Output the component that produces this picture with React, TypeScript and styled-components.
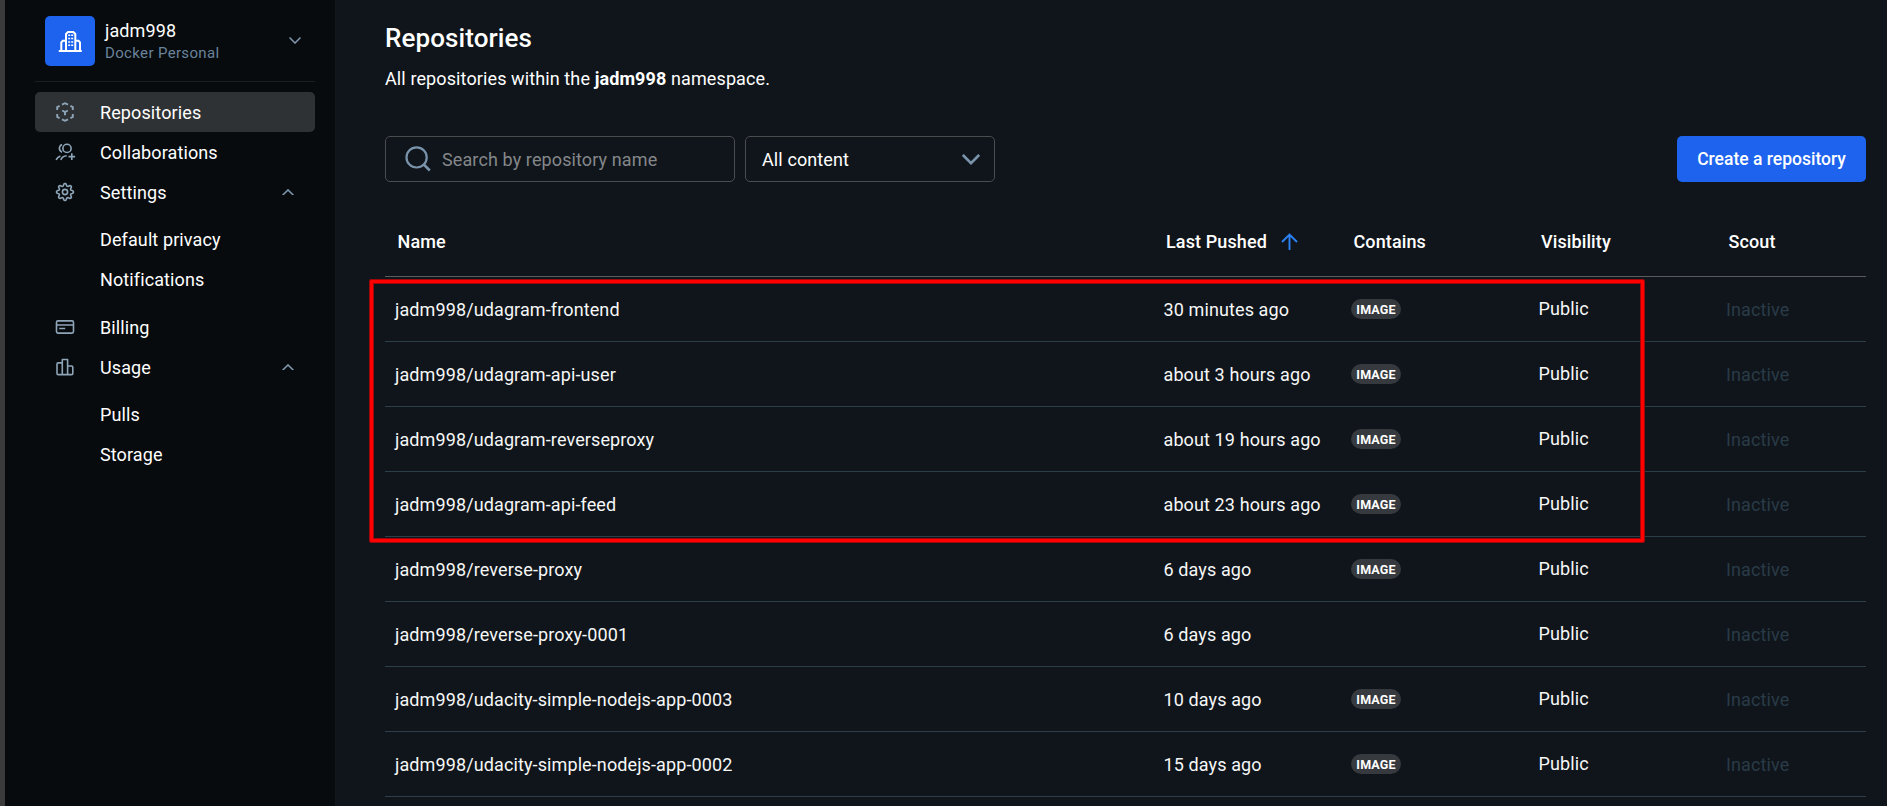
import React from 'react';
import styled, { createGlobalStyle, css } from 'styled-components';

const GlobalStyle = createGlobalStyle`
  *, *::before, *::after { box-sizing: border-box; }
  html, body { margin: 0; background: #10151b; }
  body {
    font-family: Roboto, "Liberation Sans", sans-serif;
    font-size: 18px;
    letter-spacing: 0.11px;
    color: #fff;
    overflow: hidden;
  }
  h1, p { margin: 0; }
`;

const Page = styled.div`
  display: flex;
  width: 1887px;
  height: 806px;
  overflow: hidden;
`;

const Sidebar = styled.aside`
  flex: 0 0 336px;
  padding: 16px 20px 0 30px;
  background: #070b0e;
  border-left: 5px solid #3b3b3b;
  border-right: 1px solid #12171c;
`;

const Account = styled.div`
  display: flex;
  align-items: center;
  height: 66px;
  padding: 0 14px 16px 10px;
  border-bottom: 1px solid #1b1f22;
`;

const Avatar = styled.div`
  display: grid;
  place-items: center;
  width: 50px;
  height: 50px;
  margin-right: 10px;
  border-radius: 5px;
  background: #1d63ed;
  svg { display: block; }
`;

const AccountText = styled.div`
  flex: 1;
  padding-top: 2px;
`;

const AccountName = styled.div`
  line-height: 22px;
`;

const AccountPlan = styled.div`
  font-size: 15px;
  line-height: 22px;
  letter-spacing: 0.35px;
  color: #6a839b;
`;

const Nav = styled.nav`
  padding-top: 10px;
`;

const NavItem = styled.div<{ $active?: boolean }>`
  display: flex;
  align-items: center;
  height: 40px;
  padding: 0 21px 0 20px;
  border-radius: 5px;
  ${(p) => p.$active && css`background: #2f3235;`}
`;

const NavIcon = styled.span`
  display: flex;
  width: 45px;
  svg { display: block; }
`;

const NavLabel = styled.span`
  flex: 1;
  padding-top: 1px;
`;

const SubNav = styled.div`
  padding: 7px 0 8px 45px;
`;

const Main = styled.main`
  flex: 1;
  min-width: 0;
  padding: 23px 21px 0 49px;
`;

const Title = styled.h1`
  font-size: 26px;
  font-weight: 500;
  line-height: 30px;
  letter-spacing: 0.1px;
`;

const Subtitle = styled.p`
  margin-top: 13px;
  line-height: 26px;
  strong { font-weight: 700; }
`;

const Toolbar = styled.div`
  display: flex;
  gap: 10px;
  margin-top: 44px;
`;

const Field = styled.div<{ $width: number }>`
  display: flex;
  align-items: center;
  width: ${(p) => p.$width}px;
  height: 46px;
  padding: 1px 14px 0 16px;
  border: 1px solid #4a4d50;
  border-radius: 5px;
`;

const Placeholder = styled.span`
  margin-left: 11px;
  color: #84878a;
`;

const SelectValue = styled.span`
  flex: 1;
`;

const CreateButton = styled.button`
  width: 189px;
  height: 46px;
  margin-left: auto;
  padding: 0;
  border: 0;
  border-radius: 5px;
  background: #1d63ed;
  color: #fff;
  font: 500 17.5px Roboto, "Liberation Sans", sans-serif;
  letter-spacing: 0;
`;

const Table = styled.div`
  position: relative;
  margin-top: 24px;
`;

const Row = styled.div<{ $head?: boolean }>`
  display: grid;
  grid-template-columns: 1fr 187.5px 187.5px 187.5px 150px;
  align-items: center;
  height: ${(p) => (p.$head ? 71 : 65)}px;
  border-bottom: 1px solid ${(p) => (p.$head ? '#595b5e' : '#2c3e49')};
`;

const HeadCell = styled.div`
  display: flex;
  align-items: center;
  padding: 1px 0 0 12.5px;
  font-weight: 500;
  svg { margin-left: 14px; }
`;

const Cell = styled.div<{ $raised?: boolean; $muted?: boolean }>`
  padding: ${(p) => (p.$raised ? '0 0 1px 10px' : '1px 0 0 10px')};
  color: ${(p) => (p.$muted ? '#293b47' : '#f6f7f7')};
  white-space: nowrap;
`;

const Badge = styled.span`
  display: block;
  width: 50px;
  height: 20px;
  margin-top: 1px;
  border-radius: 10px;
  background: #36393d;
  color: #fff;
  font-size: 12.5px;
  font-weight: 700;
  line-height: 21px;
  letter-spacing: 0.15px;
  text-align: center;
`;

const Highlight = styled.div`
  position: absolute;
  top: 74px;
  left: -15px;
  width: 1274px;
  height: 262px;
  border: 3px solid #fe0000;
  border-radius: 1px;
  box-shadow: 0 0 0 1px #9c080a, inset 0 0 0 1px #9c080a;
  pointer-events: none;
`;

interface ChevronProps {
  up?: boolean;
  w: number;
  stroke: number;
  color: string;
}

const Chevron = ({ up, w, stroke, color }: ChevronProps) => (
  <svg width={w} height={w * 0.58} viewBox="0 0 12 7" fill="none" stroke={color} strokeWidth={stroke}>
    <path d={up ? 'M.5 6.400 6 .9l5.500 5.500' : 'M.5 .6 6 6.100 11.500 .6'} />
  </svg>
);

const line = { fill: 'none', stroke: '#8ea5b8', strokeWidth: 1.6 };

const BuildingIcon = () => (
  <svg width="24" height="22" viewBox="0 0 24 22" fill="none" stroke="#fff" strokeWidth="2">
    <path d="M.8 21h23" />
    <path d="M3.300 21v-8.700l1.500-1.600H8M22 21v-8.700l-1.500-1.600h-3.200" />
    <path d="M8 21V4l2-2h5.300l2 2v17" />
    <path
      d="M10.200 5.300h2m1 0h2M10.200 8.600h2m1 0h2M10.200 11.900h2m1 0h2M10.200 15.200h2m1 0h2"
      strokeWidth="1.500"
    />
  </svg>
);

const RepoIcon = () => (
  <svg width="20" height="20" viewBox="0 0 20 20" {...line} strokeWidth="1.900">
    <path d="M7 2.600 10 1.200l3 1.400M15.400 3.800l2.400 1.300V8M17.800 12v2.900l-2.400 1.400M13 17.400 10 18.800l-3-1.400M4.600 16.300l-2.400-1.400V12M2.200 8V5.100l2.400-1.300M7.200 8.500 10 10l2.800-1.500M10 10v3.200" />
  </svg>
);

const CollabIcon = () => (
  <svg width="21" height="18" viewBox="-.5 0 21 18" {...line}>
    <circle cx="11.500" cy="5.400" r="4.100" />
    <path d="M6.500 1.500C3 3.200 3 7.500 6.500 9.200M.6 16.900c.8-1.900 2.200-3.200 4.300-4M5.300 16.900c1-2.600 3-4 5.900-4.200M16.300 10.300v6.600M13 13.600h6.600" />
  </svg>
);

const gearPath = (() => {
  const steps = 96;
  const points = Array.from({ length: steps }, (_, i) => {
    const angle = (i / steps) * Math.PI * 2;
    const radius = 7.3 + 1.25 * Math.tanh(Math.cos(angle * 8) * 1.6);
    return `${(10 + radius * Math.sin(angle)).toFixed(2)} ${(10 - radius * Math.cos(angle)).toFixed(2)}`;
  });
  return `M${points.join('L')}Z`;
})();

const GearIcon = () => (
  <svg width="20" height="20" viewBox="0 0 20 20" {...line}>
    <circle cx="10" cy="10" r="2.600" />
    <path d={gearPath} strokeLinejoin="round" />
  </svg>
);

const BillingIcon = () => (
  <svg width="20" height="14" viewBox="0 0 20 14" {...line}>
    <rect x="1.500" y=".9" width="17" height="12.200" rx="1.500" />
    <path d="M1.500 5h17M4.200 8.500h6" />
  </svg>
);

const UsageIcon = () => (
  <svg width="20" height="18" viewBox="0 0 20 18" {...line} strokeLinejoin="round">
    <path d="M7.300 16.600V1.500h5.300v15.100M7.300 4.900H3.200q-1.200 0-1.200 1.200v9.300q0 1.200 1.200 1.200h13.400q1.200 0 1.200-1.200V9.200q0-1.200-1.200-1.200h-4" />
  </svg>
);

const SearchIcon = () => (
  <svg width="29" height="27" viewBox="0 0 29 27" fill="none" stroke="#7993ab" strokeWidth="2.200">
    <circle cx="14.600" cy="11.400" r="10.100" />
    <path d="m21.800 18.500 6 6" strokeWidth="2.600" />
  </svg>
);

const SortArrow = () => (
  <svg width="17" height="17" viewBox="0 0 17 17" fill="none" stroke="#2b82f6" strokeWidth="1.900">
    <path d="M8.500 17V1.500M1 9l7.500-7.500L16 9" />
  </svg>
);

const repositories = [
  { name: 'udagram-frontend', pushed: '30 minutes ago', image: true },
  { name: 'udagram-api-user', pushed: 'about 3 hours ago', image: true },
  { name: 'udagram-reverseproxy', pushed: 'about 19 hours ago', image: true },
  { name: 'udagram-api-feed', pushed: 'about 23 hours ago', image: true },
  { name: 'reverse-proxy', pushed: '6 days ago', image: true },
  { name: 'reverse-proxy-0001', pushed: '6 days ago', image: false },
  { name: 'udacity-simple-nodejs-app-0003', pushed: '10 days ago', image: true },
  { name: 'udacity-simple-nodejs-app-0002', pushed: '15 days ago', image: true },
];

const navigation = [
  { label: 'Repositories', icon: <RepoIcon />, active: true },
  { label: 'Collaborations', icon: <CollabIcon /> },
  { label: 'Settings', icon: <GearIcon />, children: ['Default privacy', 'Notifications'] },
  { label: 'Billing', icon: <BillingIcon /> },
  { label: 'Usage', icon: <UsageIcon />, children: ['Pulls', 'Storage'] },
];

export default function App() {
  return (
    <>
      <GlobalStyle />
      <Page>
        <Sidebar>
          <Account>
            <Avatar><BuildingIcon /></Avatar>
            <AccountText>
              <AccountName>jadm998</AccountName>
              <AccountPlan>Docker Personal</AccountPlan>
            </AccountText>
            <Chevron w={12} stroke={1.5} color="#8197ab" />
          </Account>
          <Nav>
            {navigation.map((item) => (
              <React.Fragment key={item.label}>
                <NavItem $active={item.active}>
                  <NavIcon>{item.icon}</NavIcon>
                  <NavLabel>{item.label}</NavLabel>
                  {item.children && <Chevron up w={12} stroke={1.5} color="#7f97ad" />}
                </NavItem>
                {item.children && (
                  <SubNav>
                    {item.children.map((child) => (
                      <NavItem key={child}><NavLabel>{child}</NavLabel></NavItem>
                    ))}
                  </SubNav>
                )}
              </React.Fragment>
            ))}
          </Nav>
        </Sidebar>
        <Main>
          <Title>Repositories</Title>
          <Subtitle>All repositories within the <strong>jadm998</strong> namespace.</Subtitle>
          <Toolbar>
            <Field $width={350}>
              <SearchIcon />
              <Placeholder>Search by repository name</Placeholder>
            </Field>
            <Field $width={250}>
              <SelectValue>All content</SelectValue>
              <Chevron w={18} stroke={1.8} color="#7993ab" />
            </Field>
            <CreateButton>Create a repository</CreateButton>
          </Toolbar>
          <Table>
            <Row $head>
              <HeadCell>Name</HeadCell>
              <HeadCell>Last Pushed<SortArrow /></HeadCell>
              <HeadCell>Contains</HeadCell>
              <HeadCell>Visibility</HeadCell>
              <HeadCell>Scout</HeadCell>
            </Row>
            {repositories.map((repo) => (
              <Row key={repo.name}>
                <Cell>jadm998/{repo.name}</Cell>
                <Cell>{repo.pushed}</Cell>
                <Cell $raised>{repo.image && <Badge>IMAGE</Badge>}</Cell>
                <Cell $raised>Public</Cell>
                <Cell $muted>Inactive</Cell>
              </Row>
            ))}
            <Highlight />
          </Table>
        </Main>
      </Page>
    </>
  );
}
